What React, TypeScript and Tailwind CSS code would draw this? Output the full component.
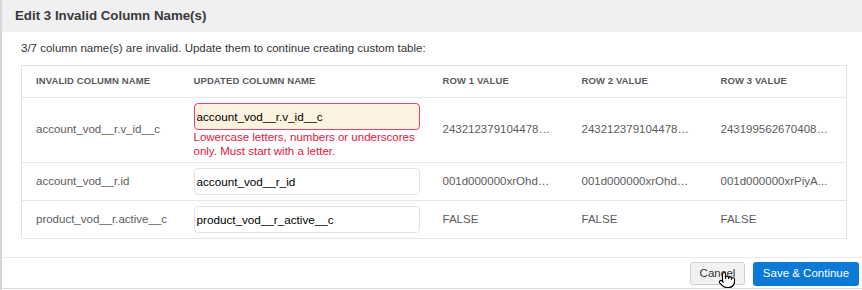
import React from 'react';
import { Pointer } from 'lucide-react';

const rows = [
  {
    name: 'account_vod__r.v_id__c',
    updated: 'account_vod__r.v_id__c',
    invalid: true,
    values: ['243212379104478…', '243212379104478…', '243199562670408…'],
  },
  {
    name: 'account_vod__r.id',
    updated: 'account_vod__r_id',
    invalid: false,
    values: ['001d000000xrOhd…', '001d000000xrOhd…', '001d000000xrPiyA...'],
  },
  {
    name: 'product_vod__r.active__c',
    updated: 'product_vod__r_active__c',
    invalid: false,
    values: ['FALSE', 'FALSE', 'FALSE'],
  },
];

const headers = ['Invalid Column Name', 'Updated Column Name', 'Row 1 Value', 'Row 2 Value', 'Row 3 Value'];

export default function App() {
  return (
    <div className="relative w-[862px] h-[290px] flex flex-col bg-white border-l-2 border-[#d6d6d6] font-['Liberation_Sans',Arial,sans-serif] overflow-hidden">
      {/* header */}
      <div className="h-[32px] shrink-0 flex items-center pl-[13px] bg-[#f0eff2]">
        <h2 className="text-[13.3px] font-bold text-[#3a3a3a]">Edit 3 Invalid Column Name(s)</h2>
      </div>

      {/* body */}
      <div className="flex-1 pt-[9px] pl-[19px] pr-[14px]">
        <p className="text-[11.5px] leading-[14px] text-[#333]">
          3/7 column name(s) are invalid. Update them to continue creating custom table:
        </p>
        <table className="mt-[10px] w-[825px] table-fixed border-collapse border border-[#e3e3e3]">
          <colgroup>
            <col className="w-[158px]" />
            <col className="w-[249px]" />
            <col className="w-[139px]" />
            <col className="w-[139px]" />
            <col className="w-[140px]" />
          </colgroup>
          <thead>
            <tr className="h-[32px] border-b border-[#e6e6e6]">
              {headers.map((h) => (
                <th
                  key={h}
                  className="pl-[14px] text-left align-middle text-[9.5px] font-bold uppercase tracking-[0.1px] text-[#5a5a5a]"
                >
                  {h}
                </th>
              ))}
            </tr>
          </thead>
          <tbody>
            {rows.map((r) => (
              <tr key={r.name} className="border-b border-[#e6e6e6]">
                <td className="pl-[14px] align-middle text-[11.5px] text-[#5c5c5c] whitespace-nowrap">{r.name}</td>
                <td className={`pl-[14px] pr-[8px] pt-[5px] align-middle ${r.invalid ? 'pb-[4px]' : 'pb-[5px]'}`}>
                  <div
                    className={`w-[226px] h-[27px] flex items-center pl-[2px] rounded-[4px] border text-[11.7px] text-black ${
                      r.invalid ? 'bg-[#fdf2df] border-[#e6446a]' : 'bg-white border-[#e2e2e2]'
                    }`}
                  >
                    {r.updated}
                  </div>
                  {r.invalid && (
                    <div className="text-[11.5px] leading-[14px] text-[#e0173f]">
                      Lowercase letters, numbers or underscores only. Must start with a letter.
                    </div>
                  )}
                </td>
                {r.values.map((v, i) => (
                  <td key={i} className="pl-[14px] align-middle text-[11.5px] text-[#5c5c5c] whitespace-nowrap overflow-hidden">
                    {v}
                  </td>
                ))}
              </tr>
            ))}
          </tbody>
        </table>
      </div>

      {/* footer */}
      <div className="h-[32px] shrink-0 flex items-start justify-end gap-[8px] pt-[4px] pr-[3px] border-t border-[#ececec] border-b border-b-[#d9d9d9] mb-[1px]">
        <button className="h-[23px] w-[55px] rounded-[3px] border border-[#cfcfcf] bg-[#f2f2f2] text-[11.5px] text-[#333]">
          Cancel
        </button>
        <button className="h-[24px] w-[106px] rounded-[3px] bg-[#0b7ad6] text-[11.5px] text-white">
          Save &amp; Continue
        </button>
      </div>

      {/* mouse cursor */}
      <Pointer className="absolute left-[716px] top-[271px]" size={18} strokeWidth={1.5} fill="white" color="black" />
    </div>
  );
}
